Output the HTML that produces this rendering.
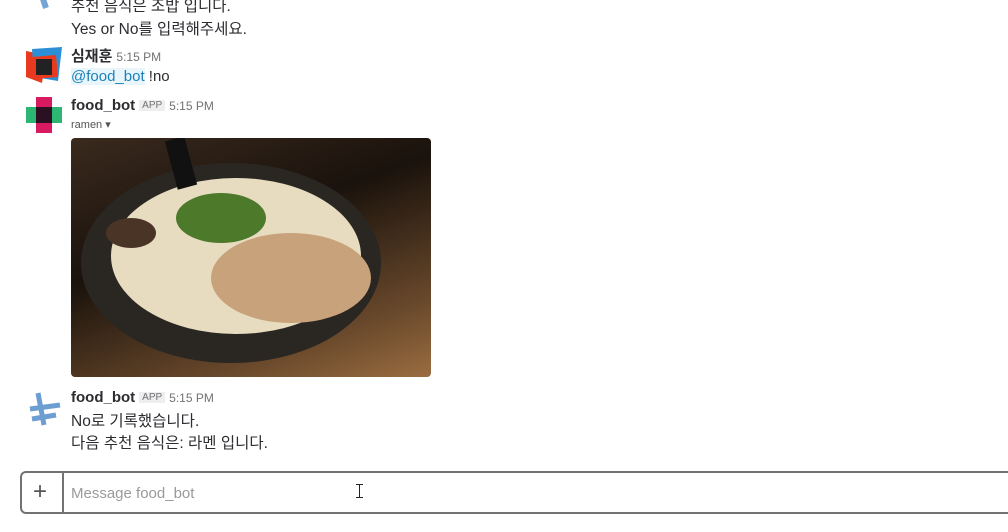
<!DOCTYPE html>
<html><head><meta charset="utf-8"><style>
body{margin:0;width:1008px;height:532px;background:#fff;overflow:hidden;position:relative;font-family:"Liberation Sans","Noto Sans CJK KR",sans-serif;color:#2c2d30}
.t{position:absolute;font-size:15px;white-space:nowrap}
.n{font-weight:bold;font-size:15px}
.tm{font-size:12px;color:#717274;margin-left:4px}
.app{font-size:10px;color:#717274;background:#eee;padding:0 3px;margin-left:4px;vertical-align:2px}
.av{position:absolute;width:36px;height:36px}
</style></head><body>
<div class="av" style="left:26px;top:-26px;"><svg width="36" height="36"><path d="M6 22 L30 14 M12 10 L20 34" stroke="#3c7ec4" stroke-width="6" opacity=".7"/></svg></div>
<div class="t" style="left:71px;top:-6px;font-size:15.5px">추천 음식은 조밥 입니다.</div>
<div class="t" style="left:71px;top:17px;font-size:15.5px">Yes or No를 입력해주세요.</div>

<div class="av" style="left:26px;top:47px"><svg width="36" height="36"><polygon points="0,4 20,8 16,36 0,30" fill="#e83a1e"/><polygon points="6,2 36,0 32,34 8,30" fill="#2b8fd6"/><polygon points="6,10 30,8 32,30 8,32" fill="#e83a1e"/><polygon points="10,12 26,12 26,28 10,28" fill="#222"/></svg></div>
<div class="t" style="left:71px;top:45px"><span class="n">심재훈</span><span class="tm">5:15 PM</span></div>
<div class="t" style="left:71px;top:68px"><span style="color:#1d82bc;background:#e8f5fa">@food_bot</span> !no</div>

<div class="av" style="left:26px;top:97px"><svg width="36" height="36"><rect x="10" y="0" width="16" height="36" fill="#d81b60"/><rect x="0" y="10" width="36" height="16" fill="#2bb673"/><rect x="10" y="10" width="16" height="16" fill="#2a1020"/></svg></div>
<div class="t" style="left:71px;top:97px"><span class="n">food_bot</span><span class="app">APP</span><span class="tm">5:15 PM</span></div>
<div class="t" style="left:71px;top:118px;font-size:11px;color:#555">ramen ▾</div>

<div style="position:absolute;left:71px;top:138px;width:360px;height:239px;border-radius:4px;overflow:hidden;background:linear-gradient(160deg,#3a2a1e,#1a120c 40%,#6b4a2c 80%,#9a6d40)">
<svg width="360" height="239"><ellipse cx="160" cy="125" rx="150" ry="100" fill="#2a2622"/><ellipse cx="165" cy="118" rx="125" ry="78" fill="#e8dcc0"/><ellipse cx="220" cy="140" rx="80" ry="45" fill="#c8a27a"/><ellipse cx="150" cy="80" rx="45" ry="25" fill="#4c7a2a"/><ellipse cx="60" cy="95" rx="25" ry="15" fill="#4a3426"/><rect x="100" y="0" width="20" height="50" fill="#111" transform="rotate(-15 110 25)"/></svg></div>

<div class="av" style="left:26px;top:391px"><svg width="36" height="36"><path d="M4 18 L34 14 M6 28 L30 24 M12 2 L18 34" stroke="#3c7ec4" stroke-width="5" opacity=".75"/></svg></div>
<div class="t" style="left:71px;top:389px"><span class="n">food_bot</span><span class="app">APP</span><span class="tm">5:15 PM</span></div>
<div class="t" style="left:71px;top:409px;font-size:15.5px">No로 기록했습니다.</div>
<div class="t" style="left:71px;top:431px;font-size:15.5px">다음 추천 음식은: 라멘 입니다.</div>

<div style="position:absolute;left:20px;top:471px;width:1000px;height:43px;border:2px solid #717274;border-radius:6px;box-sizing:border-box"></div>
<div style="position:absolute;left:62px;top:471px;width:2px;height:43px;background:#717274"></div>
<div class="t" style="left:33px;top:479px;font-size:24px;color:#555;line-height:26px">+</div>
<div class="t" style="left:71px;top:485px;color:#9a9a9a;font-size:15px">Message food_bot</div>
<div style="position:absolute;left:359px;top:484px;width:1px;height:14px;background:#222"></div>
<div style="position:absolute;left:356px;top:484px;width:7px;height:1px;background:#222"></div>
<div style="position:absolute;left:356px;top:497px;width:7px;height:1px;background:#222"></div>
</body></html>
